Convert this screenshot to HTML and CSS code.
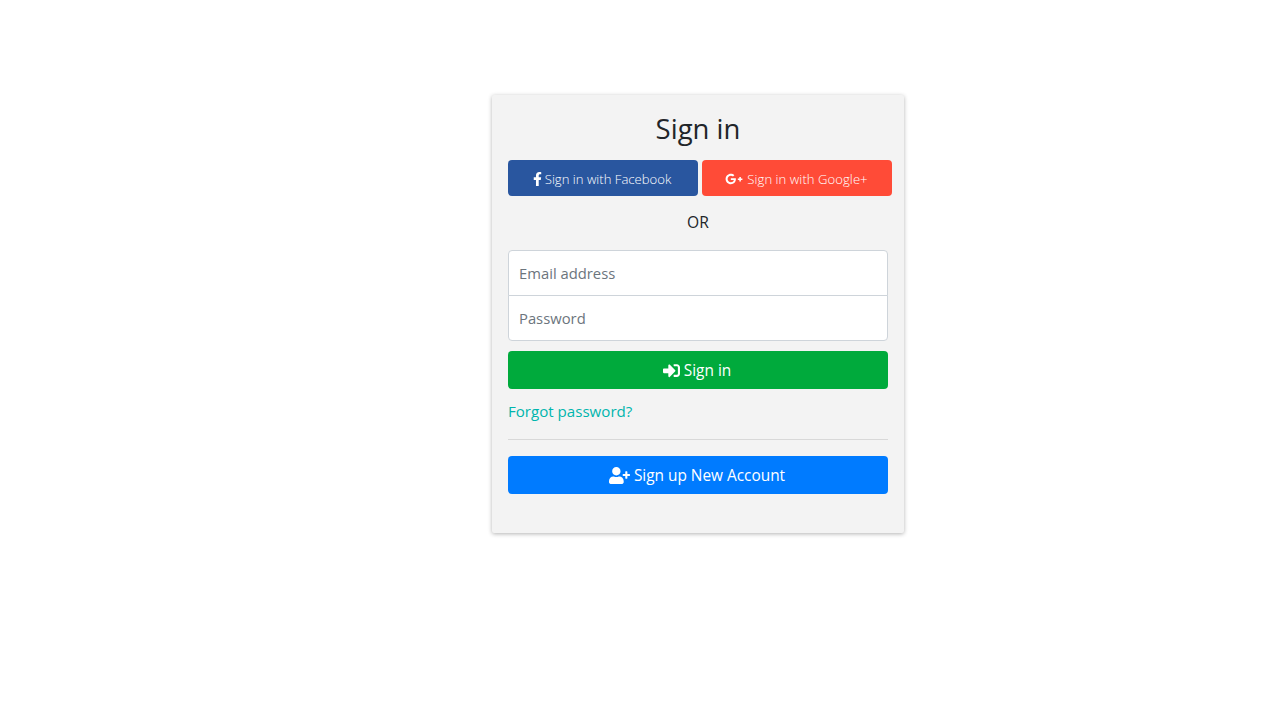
FILE: index.html
```html
<!DOCTYPE html>
<html lang="en">
<head>
<meta charset="utf-8">
<title>Sign in</title>
<link rel="stylesheet" href="styles.css">
</head>
<body>
<main class="page">
  <section class="card">
    <h1 class="title">Sign in</h1>
    <div class="social">
      <a class="btn-social facebook" href="#">
        <svg class="icon" viewBox="0 0 320 512"><path d="M279.14 288l14.22-92.66h-88.91v-60.13c0-25.35 12.42-50.06 52.24-50.06h40.42V6.26S260.43 0 225.36 0c-73.22 0-121.08 44.38-121.08 124.72v70.62H22.89V288h81.39v224h100.17V288z"/></svg>
        <span>Sign in with Facebook</span>
      </a>
      <a class="btn-social google" href="#">
        <svg class="icon" viewBox="0 0 640 512"><path d="M386.061 228.496c1.834 9.692 3.143 19.384 3.143 31.956C389.204 370.205 315.599 448 204.8 448c-106.084 0-192-85.915-192-192s85.916-192 192-192c51.864 0 95.083 18.859 128.611 50.292l-52.126 50.03c-14.145-13.621-39.028-29.599-76.485-29.599-65.484 0-118.92 54.221-118.92 121.277 0 67.056 53.436 121.277 118.92 121.277 75.961 0 104.513-54.745 108.965-82.773H204.8v-66.009h181.261zm185.406 6.437V179.2h-56.001v55.733h-55.733v56.001h55.733v55.733h56.001v-55.733H627.2v-56.001h-55.733z"/></svg>
        <span>Sign in with Google+</span>
      </a>
    </div>
    <p class="or">OR</p>
    <form class="form">
      <div class="fields">
        <input class="field field-top" type="email" placeholder="Email address">
        <input class="field field-bottom" type="password" placeholder="Password">
      </div>
      <button class="btn btn-green" type="button">
        <svg class="icon" viewBox="0 0 512 512"><path d="M416 448h-84c-6.6 0-12-5.4-12-12v-40c0-6.6 5.4-12 12-12h84c17.7 0 32-14.3 32-32V160c0-17.7-14.3-32-32-32h-84c-6.6 0-12-5.4-12-12V76c0-6.6 5.4-12 12-12h84c53 0 96 43 96 96v192c0 53-43 96-96 96zm-47-201L201 79c-15-15-41-4.5-41 17v96H24c-13.3 0-24 10.7-24 24v96c0 13.3 10.7 24 24 24h136v96c0 21.5 26 32 41 17l168-168c9.3-9.4 9.3-24.6 0-34z"/></svg>
        <span>Sign in</span>
      </button>
      <a class="forgot" href="#">Forgot password?</a>
      <hr class="rule">
      <button class="btn btn-blue" type="button">
        <svg class="icon" viewBox="0 0 640 512"><path d="M624 208h-64v-64c0-8.8-7.2-16-16-16h-32c-8.8 0-16 7.2-16 16v64h-64c-8.8 0-16 7.2-16 16v32c0 8.8 7.2 16 16 16h64v64c0 8.8 7.2 16 16 16h32c8.8 0 16-7.2 16-16v-64h64c8.8 0 16-7.2 16-16v-32c0-8.8-7.2-16-16-16zm-400 48c70.7 0 128-57.3 128-128S294.7 0 224 0 96 57.3 96 128s57.3 128 128 128zm89.6 32h-16.7c-22.2 10.2-46.9 16-72.9 16s-50.6-5.8-72.9-16h-16.7C60.2 288 0 348.2 0 422.4V464c0 26.5 21.5 48 48 48h352c26.5 0 48-21.5 48-48v-41.6c0-74.2-60.2-134.4-134.4-134.4z"/></svg>
        <span>Sign up New Account</span>
      </button>
    </form>
  </section>
</main>
</body>
</html>
```
FILE: styles.css
```css
* { box-sizing: border-box; }
html, body { margin: 0; background: #fff; }
body {
  font-family: "Open Sans", "Noto Sans", sans-serif;
  font-size: 15.4px;
  color: #212529;
}
.page {
  width: 1280px;
  height: 720px;
  padding: 95px 0 0 492px;
  overflow: hidden;
}
.card {
  width: 412px;
  height: 438px;
  padding: 16px;
  background: #f3f3f3;
  border-radius: 2px;
  box-shadow: 0 1px 4px rgba(0,0,0,.3);
}
.title {
  margin: 0;
  height: 49px;
  font-size: 27.5px;
  font-weight: 400;
  line-height: 36px;
  text-align: center;
}
.social { display: flex; gap: 4px; width: 384px; }
.btn-social {
  flex: 0 0 190px;
  height: 36px;
  padding: 1px 2px 0 0;
  display: flex;
  align-items: center;
  justify-content: center;
  border-radius: 4px;
  color: #fff;
  font-size: 13.1px;
  font-weight: 300;
  text-decoration: none;
}
.facebook { background: #29569f; gap: 3px; }
.google { background: #ff4b37; gap: 4px; padding-right: 1px; letter-spacing: .05px; }
.icon { fill: currentColor; display: block; flex: none; }
.facebook .icon { width: 9px; height: 14px; }
.google .icon { width: 18px; height: 14px; }
.or {
  margin: 0;
  height: 54px;
  line-height: 53px;
  text-align: center;
  font-size: 15.6px;
}
.form { display: flex; flex-direction: column; align-items: stretch; width: 380px; }
.fields { display: flex; flex-direction: column; }
.field {
  height: 46px;
  padding: 0 10px;
  border: 1px solid #ced4da;
  background: #fff;
  font: inherit;
  font-size: 14.8px;
  color: #495057;
  outline: none;
}
.field::placeholder { color: #6c757d; opacity: 1; }
.field-top { border-radius: 4px 4px 0 0; }
.field-bottom { border-radius: 0 0 4px 4px; margin-top: -1px; }
.btn {
  height: 38px;
  display: flex;
  align-items: center;
  justify-content: center;
  gap: 4px;
  border: 0;
  border-radius: 4px;
  color: #fff;
  font: inherit;
  padding: 0 2px 0 0;
}
.btn .icon { height: 17px; }
.btn-green { background: #00aa3c; margin-top: 10px; }
.btn-green .icon { width: 17px; }
.btn-blue { background: #007bff; }
.btn-blue .icon { width: 21px; }
.forgot {
  margin-top: 12px;
  height: 20px;
  line-height: 20px;
  font-size: 15.1px;
  color: #00b5ad;
  text-decoration: none;
}
.rule { width: 100%; margin: 18px 0 16px; border: 0; border-top: 1px solid #d8d8d8; }
```
